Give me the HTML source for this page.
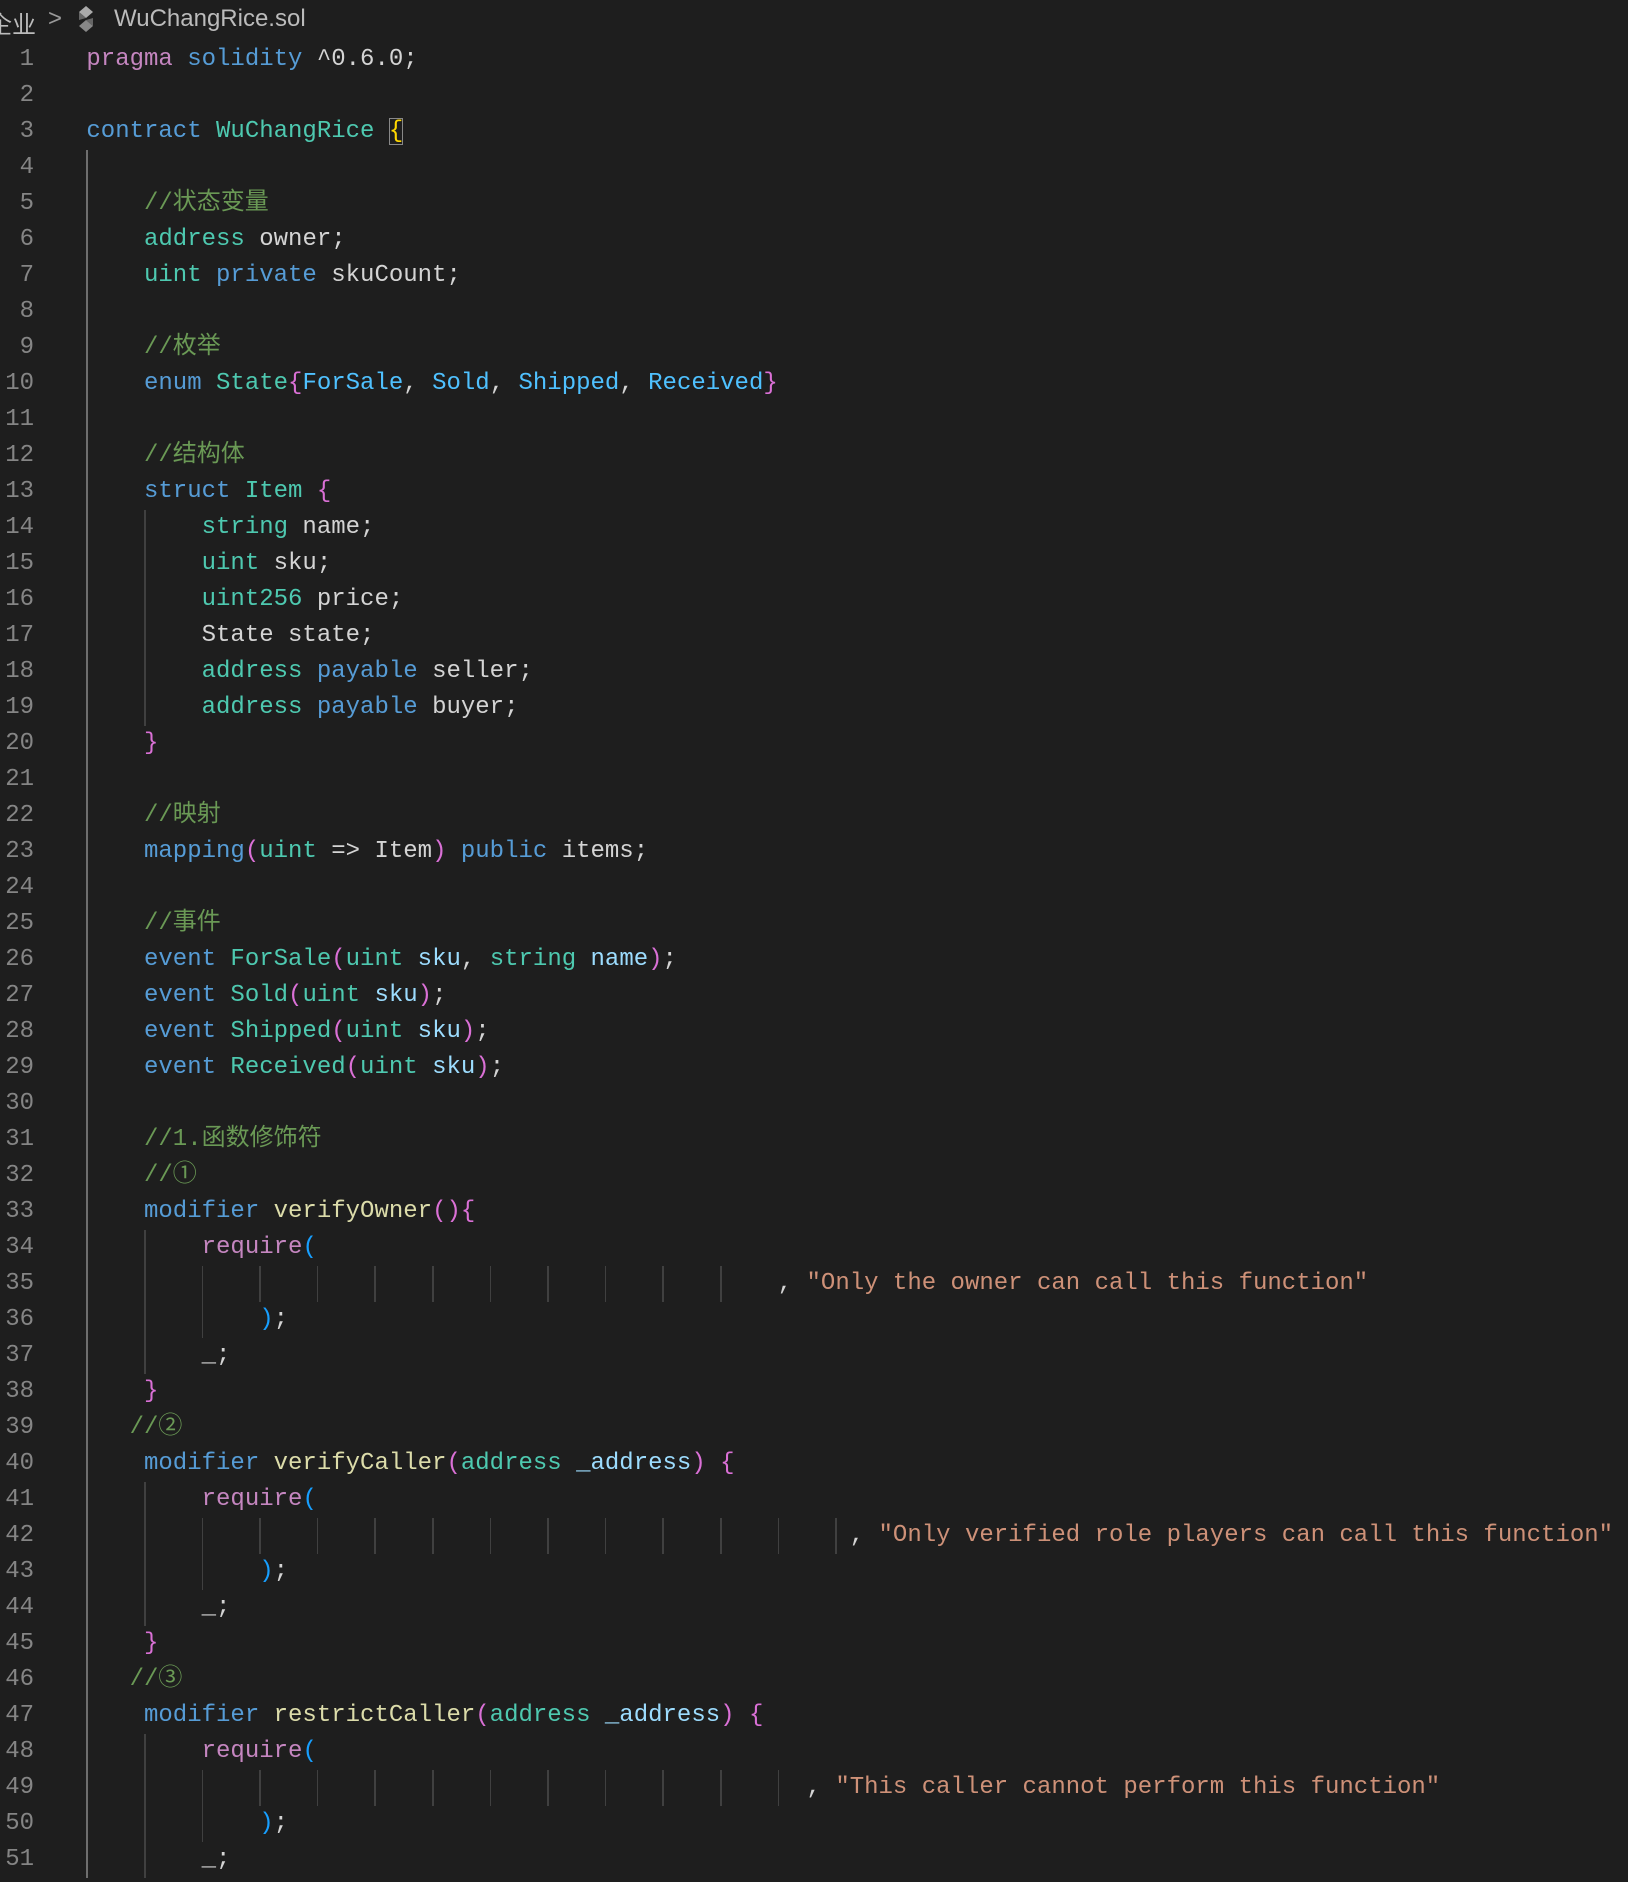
<!DOCTYPE html>
<html><head><meta charset="utf-8">
<style>
html,body{margin:0;padding:0;background:#1e1e1e;width:1628px;height:1882px;overflow:hidden;}
.crumb{position:absolute;top:0;left:0;height:36px;font-family:"Liberation Sans","Noto Sans CJK SC",sans-serif;font-size:24px;color:#bbbbbb;white-space:nowrap;}
.crumb span{position:absolute;top:5px;}
.code{position:absolute;left:0;top:42px;font-family:"Liberation Mono","Noto Sans CJK SC",monospace;font-size:24px;}
.ln{position:absolute;left:0;width:34px;text-align:right;color:#858585;height:36px;line-height:36px;}
.l{position:absolute;left:86.4px;white-space:pre;color:#d4d4d4;height:36px;line-height:36px;}
.g{position:absolute;width:1.5px;background:#404040;}
.k{color:#569cd6}.t{color:#4ec9b0}.c{color:#6a9955}.p{color:#c586c0}.b{color:#da70d6}.y{color:#ffd700}.e{color:#4fc1ff}.f{color:#dcdcaa}.v{color:#9cdcfe}.s{color:#ce9178}.bl{color:#179fff}
</style></head><body>
<div class="crumb"><span style="left:-12px">企业</span><span style="left:48px;color:#999">&gt;</span>
<svg style="position:absolute;left:76px;top:6px" width="20" height="26" viewBox="0 0 20 26"><polygon points="10,0 17,6 10,12 3,6" fill="#aaa"/><polygon points="10,14 17,20 10,26 3,20" fill="#888"/><polygon points="3,6 10,12 3,14" fill="#666"/><polygon points="17,12 10,14 17,20" fill="#666"/></svg>
<span style="left:114px">WuChangRice.sol</span></div>
<div class="code" id="code"></div>
<script>
var L=[
'<span class="p">pragma</span> <span class="k">solidity</span> ^0.6.0;',
'',
'<span class="k">contract</span> <span class="t">WuChangRice</span> <span class="y" style="outline:1.5px solid #888;outline-offset:-1px">{</span>',
'',
'    <span class="c">//状态变量</span>',
'    <span class="t">address</span> owner;',
'    <span class="t">uint</span> <span class="k">private</span> skuCount;',
'',
'    <span class="c">//枚举</span>',
'    <span class="k">enum</span> <span class="t">State</span><span class="b">{</span><span class="e">ForSale</span>, <span class="e">Sold</span>, <span class="e">Shipped</span>, <span class="e">Received</span><span class="b">}</span>',
'',
'    <span class="c">//结构体</span>',
'    <span class="k">struct</span> <span class="t">Item</span> <span class="b">{</span>',
'        <span class="t">string</span> name;',
'        <span class="t">uint</span> sku;',
'        <span class="t">uint256</span> price;',
'        State state;',
'        <span class="t">address</span> <span class="k">payable</span> seller;',
'        <span class="t">address</span> <span class="k">payable</span> buyer;',
'    <span class="b">}</span>',
'',
'    <span class="c">//映射</span>',
'    <span class="k">mapping</span><span class="b">(</span><span class="t">uint</span> =&gt; Item<span class="b">)</span> <span class="k">public</span> items;',
'',
'    <span class="c">//事件</span>',
'    <span class="k">event</span> <span class="t">ForSale</span><span class="b">(</span><span class="t">uint</span> <span class="v">sku</span>, <span class="t">string</span> <span class="v">name</span><span class="b">)</span>;',
'    <span class="k">event</span> <span class="t">Sold</span><span class="b">(</span><span class="t">uint</span> <span class="v">sku</span><span class="b">)</span>;',
'    <span class="k">event</span> <span class="t">Shipped</span><span class="b">(</span><span class="t">uint</span> <span class="v">sku</span><span class="b">)</span>;',
'    <span class="k">event</span> <span class="t">Received</span><span class="b">(</span><span class="t">uint</span> <span class="v">sku</span><span class="b">)</span>;',
'',
'    <span class="c">//1.函数修饰符</span>',
'    <span class="c">//①</span>',
'    <span class="k">modifier</span> <span class="f">verifyOwner</span><span class="b">(){</span>',
'        <span class="p">require</span><span class="bl">(</span>',
' '.repeat(48)+', <span class="s">"Only the owner can call this function"</span>',
'            <span class="bl">)</span>;',
'        _;',
'    <span class="b">}</span>',
'   <span class="c">//②</span>',
'    <span class="k">modifier</span> <span class="f">verifyCaller</span><span class="b">(</span><span class="t">address</span> <span class="v">_address</span><span class="b">)</span> <span class="b">{</span>',
'        <span class="p">require</span><span class="bl">(</span>',
' '.repeat(53)+', <span class="s">"Only verified role players can call this function"</span>',
'            <span class="bl">)</span>;',
'        _;',
'    <span class="b">}</span>',
'   <span class="c">//③</span>',
'    <span class="k">modifier</span> <span class="f">restrictCaller</span><span class="b">(</span><span class="t">address</span> <span class="v">_address</span><span class="b">)</span> <span class="b">{</span>',
'        <span class="p">require</span><span class="bl">(</span>',
' '.repeat(50)+', <span class="s">"This caller cannot perform this function"</span>',
'            <span class="bl">)</span>;',
'        _;'
];
var h='';
for(var i=0;i<L.length;i++){var ty=i*36;
h+='<div class="ln" style="top:'+ty+'px">'+(i+1)+'</div><div class="l" style="top:'+ty+'px">'+L[i]+'</div>';}
function g(col,a,b,c){h+='<div class="g" style="left:'+(86.4+col*14.4)+'px;top:'+((a-1)*36)+'px;height:'+((b-a+1)*36)+'px;'+(c?'background:'+c:'')+'"></div>';}
g(0,4,51,'#6e6e6e');
g(4,14,19);
[[34,48],[41,53],[48,50]].forEach(function(m){var s=m[0];g(4,s,s+3);g(8,s+1,s+2);for(var c=12;c<=m[1]-1;c+=4)g(c,s+1,s+1);});
document.getElementById('code').innerHTML=h;
</script>
</body></html>
